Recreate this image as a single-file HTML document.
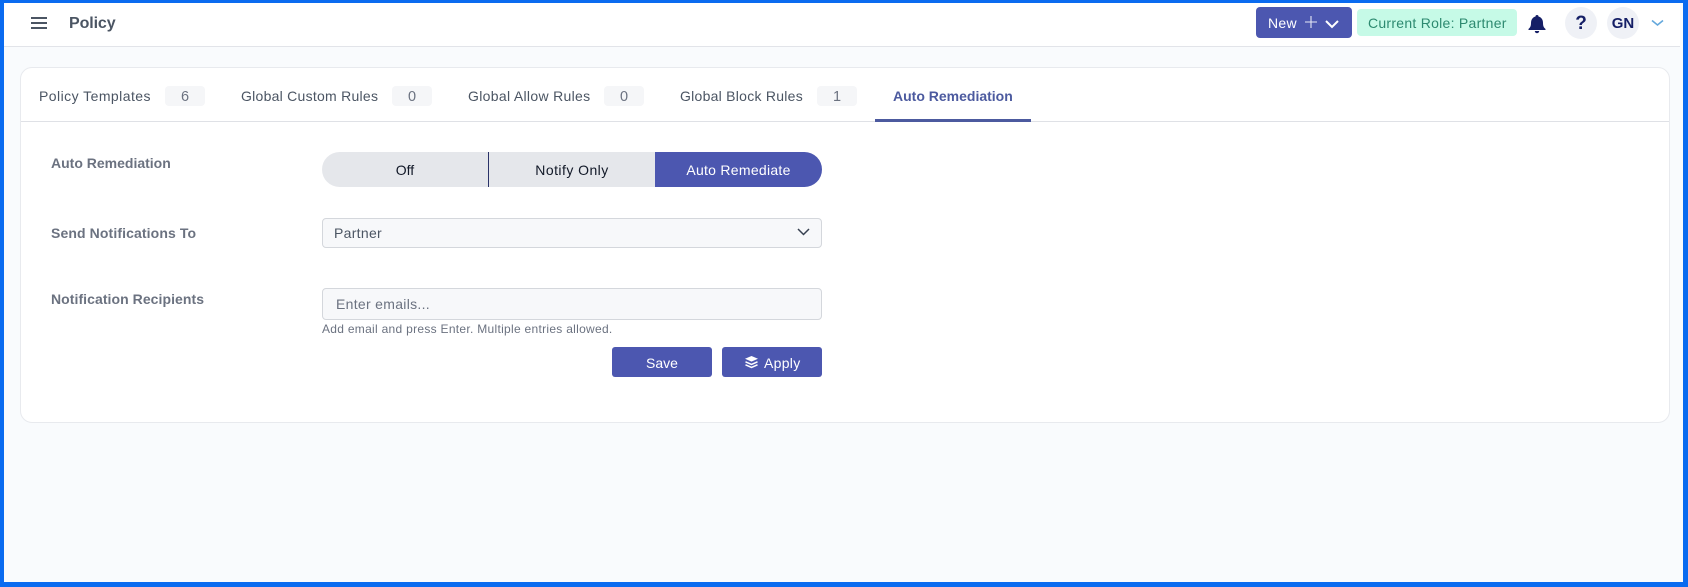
<!DOCTYPE html>
<html lang="en">
<head>
<meta charset="utf-8">
<title>Policy</title>
<style>
*{box-sizing:border-box;margin:0;padding:0}
html,body{width:1688px;height:587px;overflow:hidden;background:#f9fbfd;font-family:"Liberation Sans",sans-serif}
.abs,.t{position:absolute}
.t{white-space:nowrap;line-height:20px;height:20px}
#frame{position:absolute;left:0;top:0;width:1688px;height:587px;border:solid #0a6bf0;border-width:3px 5px 5px 4px;z-index:9;pointer-events:none}
#head{position:absolute;left:4px;top:3px;width:1676px;height:44px;background:#fff;border-bottom:1px solid #e2e4e9}
#card{position:absolute;left:20px;top:67px;width:1650px;height:356px;background:#fff;border:1px solid #e8eaee;border-radius:12px}
.tabline{position:absolute;left:21px;top:121px;width:1648px;height:1px;background:#dfe1e6}
.tab{font-size:14px;color:#4b5563}
.badge{position:absolute;top:86px;height:20px;background:#f5f6f8;border-radius:4px;color:#6b7280;font-size:14.5px;line-height:22px;text-align:center}
.lab{font-size:14px;font-weight:bold;color:#6b7280}
.seg{position:absolute;top:152px;height:35px;background:#e5e7eb;font-size:14px;line-height:37px;text-align:center;color:#111827}
.field{position:absolute;left:322px;width:500px;background:#f7f8fa;border:1px solid #d4d7dc;border-radius:4px}
.btn{position:absolute;top:347px;height:30px;background:#4c57b0;border-radius:3px;color:#fff;font-size:14px;line-height:33px}
</style>
</head>
<body>
<div id="head"></div>
<svg class="abs" style="left:31px;top:17px" width="17" height="12" viewBox="0 0 17 12"><path d="M0 1h16M0 6h16M0 11h16" stroke="#4b5563" stroke-width="2"/></svg>
<div class="t" style="left:69px;top:14px;font-size:16px;font-weight:bold;color:#4b5563;letter-spacing:-.1px">Policy</div>

<div class="abs" style="left:1256px;top:7px;width:96px;height:31px;background:#4c57b0;border-radius:4px"></div>
<div class="t" style="left:1268px;top:13px;font-size:14px;color:#fff;letter-spacing:.3px">New</div>
<svg class="abs" style="left:1304px;top:15px" width="14" height="14" viewBox="0 0 14 14"><path d="M7 1v12M1 7h12" stroke="#e6e8f6" stroke-width="1.1"/></svg>
<svg class="abs" style="left:1324px;top:19px" width="16" height="10" viewBox="0 0 16 10"><path d="M2 2l6 6 6-6" fill="none" stroke="#fff" stroke-width="2"/></svg>
<div class="abs" style="left:1357px;top:9px;width:160px;height:27px;background:#c6fae7;border-radius:4px"></div>
<div class="t" style="left:1368px;top:13px;font-size:14px;color:#2d8a70;letter-spacing:.27px">Current Role: Partner</div>
<svg class="abs" style="left:1528px;top:14px" width="18" height="20" viewBox="0 0 18 20"><path d="M9 1c1 0 1.500.6 1.500 1.500C13.500 3.300 15 5.800 15 9c0 3 .8 4.500 2.500 6v1H.5v-1C2.200 13.500 3 12 3 9c0-3.200 1.500-5.700 4.500-6.500C7.500 1.600 8 1 9 1zM6.800 17h4.400c0 1.300-1 2.200-2.200 2.200S6.800 18.300 6.800 17z" fill="#151f66"/></svg>
<div class="abs" style="left:1565px;top:7px;width:32px;height:32px;border-radius:50%;background:#eff1f6"></div>
<div class="t" style="left:1565px;top:14px;width:32px;text-align:center;font-size:19px;font-weight:bold;color:#151f66">?</div>
<div class="abs" style="left:1607px;top:7px;width:32px;height:32px;border-radius:50%;background:#eff1f6"></div>
<div class="t" style="left:1607px;top:14px;width:32px;text-align:center;font-size:15px;font-weight:bold;color:#151f66">GN</div>
<svg class="abs" style="left:1651px;top:19px" width="13" height="8" viewBox="0 0 13 8"><path d="M1 1.500l5.500 4.500L12 1.500" fill="none" stroke="#64a8dc" stroke-width="1.600"/></svg>

<div id="card"></div>
<div class="tabline"></div>

<div class="t tab" style="left:39px;top:86px;letter-spacing:.45px">Policy Templates</div>
<div class="badge" style="left:165px;width:40px">6</div>
<div class="t tab" style="left:241px;top:86px;letter-spacing:.26px">Global Custom Rules</div>
<div class="badge" style="left:392px;width:40px">0</div>
<div class="t tab" style="left:468px;top:86px;letter-spacing:.32px">Global Allow Rules</div>
<div class="badge" style="left:604px;width:40px">0</div>
<div class="t tab" style="left:680px;top:86px;letter-spacing:.26px">Global Block Rules</div>
<div class="badge" style="left:817px;width:40px">1</div>
<div class="t tab" style="left:893px;top:86px;font-weight:bold;color:#4c5a9f">Auto Remediation</div>
<div class="abs" style="left:875px;top:119px;width:156px;height:3px;background:#4c5a9f"></div>

<div class="t lab" style="left:51px;top:153px">Auto Remediation</div>
<div class="t lab" style="left:51px;top:223px;letter-spacing:.11px">Send Notifications To</div>
<div class="t lab" style="left:51px;top:289px;letter-spacing:.06px">Notification Recipients</div>

<div class="seg" style="left:322px;width:167px;border-radius:18px 0 0 18px;border-right:1px solid #2a3268">Off</div>
<div class="seg" style="left:489px;width:166px;letter-spacing:.45px">Notify Only</div>
<div class="seg" style="left:655px;width:167px;background:#4c57b0;color:#fff;border-radius:0 18px 18px 0;letter-spacing:.28px">Auto Remediate</div>

<div class="field" style="top:218px;height:30px"></div>
<div class="t" style="left:334px;top:223px;font-size:14px;color:#4b5563;letter-spacing:.3px">Partner</div>
<svg class="abs" style="left:797px;top:228px" width="13" height="8" viewBox="0 0 13 8"><path d="M1 1l5.500 5.500L12 1" fill="none" stroke="#374151" stroke-width="1.500"/></svg>

<div class="field" style="top:288px;height:32px"></div>
<div class="t" style="left:336px;top:294px;font-size:14px;color:#6b7280;letter-spacing:.3px">Enter emails...</div>
<div class="t" style="left:322px;top:319px;font-size:12px;color:#6b7280;letter-spacing:.29px">Add email and press Enter. Multiple entries allowed.</div>

<div class="btn" style="left:612px;width:100px;text-align:center">Save</div>
<div class="btn" style="left:722px;width:100px"></div>
<svg class="abs" style="left:744px;top:355px" width="15" height="14" viewBox="0 0 15 14"><path d="M7.500 1L14 3.800 7.500 6.600 1 3.800z" fill="#fff"/><path d="M1.500 6.800l6 2.600 6-2.600M1.500 9.800l6 2.600 6-2.600" fill="none" stroke="#fff" stroke-width="1.500"/></svg>
<div class="t" style="left:764px;top:353px;font-size:14px;color:#fff;letter-spacing:.3px">Apply</div>

<div id="frame"></div>
</body>
</html>
